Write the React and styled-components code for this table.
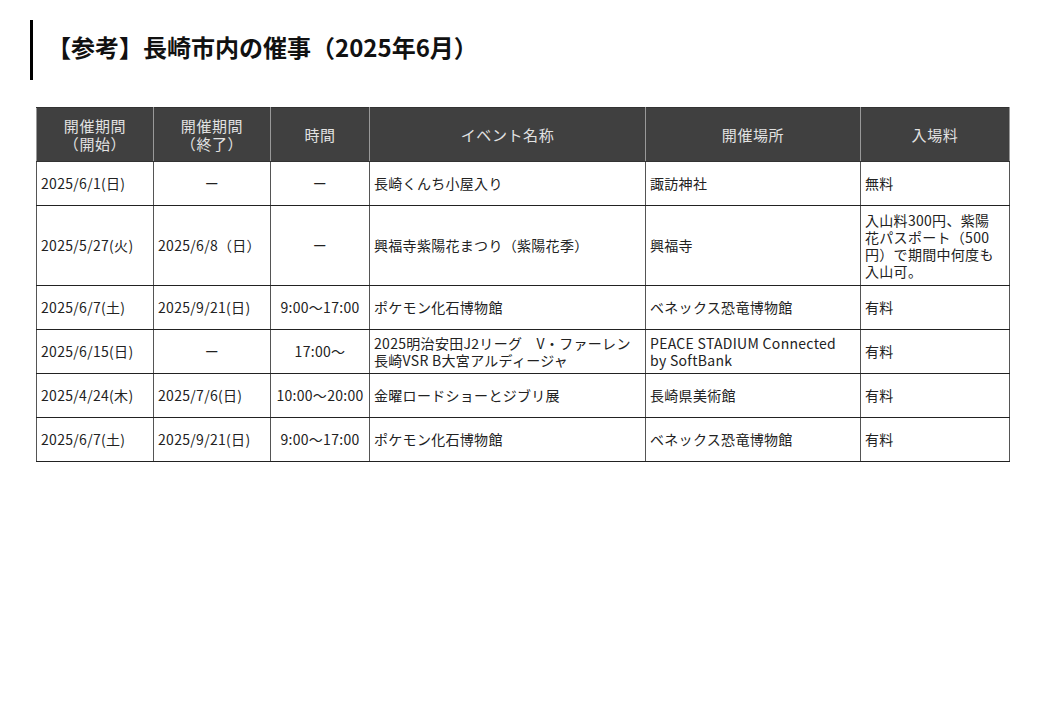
import React from "react";
import styled, { createGlobalStyle } from "styled-components";

const GlobalStyle = createGlobalStyle`
  body {
    margin: 0;
    background: #fff;
    font-family: "Noto Sans CJK JP", "Noto Sans", sans-serif;
    color: #222;
  }
`;

const Page = styled.div`
  width: 1040px;
  height: 720px;
  padding: 20px 0 0 30px;
  box-sizing: border-box;
`;

const Heading = styled.h1`
  margin: 0;
  height: 60px;
  border-left: 3px solid #000;
  padding-left: 14px;
  font-size: 24px;
  font-weight: bold;
  line-height: 54px;
  color: #111;
`;

const Table = styled.table`
  margin: 27px 0 0 6px;
  border-collapse: collapse;
  table-layout: fixed;
  width: 973px;
  font-size: 14px;
  line-height: 17px;
  letter-spacing: 0.3px;
`;

const Th = styled.th`
  background: #404040;
  color: #e2e2e2;
  font-weight: normal;
  font-size: 15px;
  letter-spacing: 0.6px;
  height: 53px;
  padding: 0;
  text-align: center;
  border: 1px solid #333;
  border-left-color: #999;
  border-right-color: #999;
  line-height: 18px;
`;

const Td = styled.td`
  height: ${(p) => p.h || 43}px;
  padding: 0 4px;
  text-align: ${(p) => (p.center ? "center" : "left")};
  border: 1px solid #222;
  border-left-color: #555;
  border-right-color: #555;
  vertical-align: middle;
  white-space: nowrap;
  overflow: hidden;
`;

const cols = [117, 117, 99, 276, 215, 149];

const lines = (t) =>
  t.split("\n").map((s, i) => (
    <React.Fragment key={i}>
      {i > 0 && <br />}
      {s}
    </React.Fragment>
  ));

const rows = [
  ["2025/6/1(日)", "ー", "ー", "長崎くんち小屋入り", "諏訪神社", "無料"],
  [
    "2025/5/27(火)",
    "2025/6/8（日）",
    "ー",
    "興福寺紫陽花まつり（紫陽花季）",
    "興福寺",
    "入山料300円、紫陽\n花パスポート（500\n円）で期間中何度も\n入山可。",
  ],
  ["2025/6/7(土)", "2025/9/21(日)", "9:00〜17:00", "ポケモン化石博物館", "ベネックス恐竜博物館", "有料"],
  [
    "2025/6/15(日)",
    "ー",
    "17:00〜",
    "2025明治安田J2リーグ　V・ファーレン\n長崎VSR B大宮アルディージャ",
    "PEACE STADIUM Connected\nby SoftBank",
    "有料",
  ],
  ["2025/4/24(木)", "2025/7/6(日)", "10:00〜20:00", "金曜ロードショーとジブリ展", "長崎県美術館", "有料"],
  ["2025/6/7(土)", "2025/9/21(日)", "9:00〜17:00", "ポケモン化石博物館", "ベネックス恐竜博物館", "有料"],
];

export default function App() {
  return (
    <Page>
      <GlobalStyle />
      <Heading>【参考】長崎市内の催事（2025年6月）</Heading>
      <Table>
        <colgroup>
          {cols.map((w, i) => (
            <col key={i} style={{ width: w }} />
          ))}
        </colgroup>
        <thead>
          <tr>
            <Th>開催期間<br />（開始）</Th>
            <Th>開催期間<br />（終了）</Th>
            <Th>時間</Th>
            <Th>イベント名称</Th>
            <Th>開催場所</Th>
            <Th>入場料</Th>
          </tr>
        </thead>
        <tbody>
          {rows.map((r, i) => (
            <tr key={i}>
              <Td>{r[0]}</Td>
              <Td center={r[1] === "ー"}>{r[1]}</Td>
              <Td center>{r[2]}</Td>
              <Td>{lines(r[3])}</Td>
              <Td>{lines(r[4])}</Td>
              <Td h={i === 1 ? 79 : 43}>{lines(r[5])}</Td>
            </tr>
          ))}
        </tbody>
      </Table>
    </Page>
  );
}
